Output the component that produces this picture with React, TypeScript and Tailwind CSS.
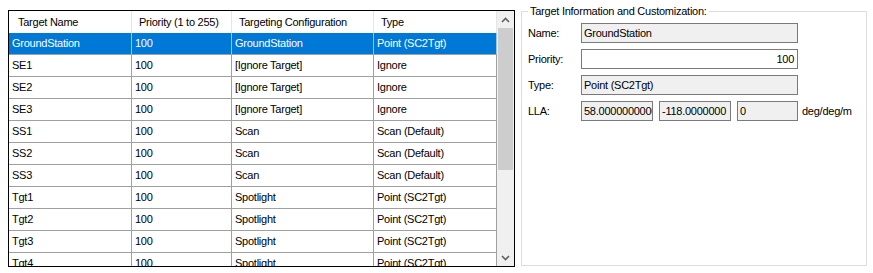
import React from 'react';

const columns = [
  { title: 'Target Name', w: 'w-[123px]', hpad: 'pl-[9px]' },
  { title: 'Priority (1 to 255)', w: 'w-[100px]', hpad: 'pl-[7px]' },
  { title: 'Targeting Configuration', w: 'w-[142px]', hpad: 'pl-[7px]' },
  { title: 'Type', w: 'w-[123px]', hpad: 'pl-[7px]' },
];

const rows = [
  ['GroundStation', '100', 'GroundStation', 'Point (SC2Tgt)'],
  ['SE1', '100', '[Ignore Target]', 'Ignore'],
  ['SE2', '100', '[Ignore Target]', 'Ignore'],
  ['SE3', '100', '[Ignore Target]', 'Ignore'],
  ['SS1', '100', 'Scan', 'Scan (Default)'],
  ['SS2', '100', 'Scan', 'Scan (Default)'],
  ['SS3', '100', 'Scan', 'Scan (Default)'],
  ['Tgt1', '100', 'Spotlight', 'Point (SC2Tgt)'],
  ['Tgt2', '100', 'Spotlight', 'Point (SC2Tgt)'],
  ['Tgt3', '100', 'Spotlight', 'Point (SC2Tgt)'],
  ['Tgt4', '100', 'Spotlight', 'Point (SC2Tgt)'],
];

const Chevron = ({ down }: { down?: boolean }) => (
  <svg width="9" height="6" viewBox="0 0 9 6" className={down ? 'rotate-180' : ''}>
    <path d="M1 5 L4.5 1.5 L8 5" fill="none" stroke="#606060" strokeWidth="1.6" />
  </svg>
);

const Box = ({ value, w, readOnly = true, right }: { value: string; w: string; readOnly?: boolean; right?: boolean }) => (
  <div
    className={`${w} h-[20px] border border-[#7a7a7a] flex items-center overflow-hidden whitespace-nowrap ${readOnly ? 'bg-[#f0f0f0]' : 'bg-white'} ${right ? 'justify-end pr-[3px]' : 'pl-[2px]'}`}
  >
    {value}
  </div>
);

export default function App() {
  return (
    <div className="w-[873px] h-[273px] bg-white flex items-start pl-[8px] pt-[10px] text-[11px] tracking-[-0.25px] text-black font-['Liberation_Sans',Arial,sans-serif] overflow-hidden">
      {/* grid */}
      <div className="w-[507px] h-[257px] border border-black flex overflow-hidden shrink-0">
        <div className="w-[488px] flex flex-col overflow-hidden">
          <div className="flex h-[22px] shrink-0 bg-white">
            {columns.map((c, i) => (
              <div key={i} className={`${c.w} ${c.hpad} h-full border-r border-[#e5e5e5] flex items-center shrink-0 whitespace-nowrap`}>
                {c.title}
              </div>
            ))}
          </div>
          {rows.map((r, ri) => {
            const sel = ri === 0;
            return (
              <div key={ri} className={`flex h-[22px] shrink-0 border-b border-[#a0a0a0] ${sel ? 'bg-[#0078d7] text-white' : 'bg-white'}`}>
                {r.map((cell, ci) => (
                  <div key={ci} className={`${columns[ci].w} h-full border-r ${sel ? 'border-[#9cc3e8]' : 'border-[#a0a0a0]'} flex items-center pl-[3px] shrink-0 whitespace-nowrap overflow-hidden`}>
                    {cell}
                  </div>
                ))}
              </div>
            );
          })}
        </div>
        {/* scrollbar */}
        <div className="w-[17px] h-full bg-[#f0f0f0] flex flex-col">
          <div className="h-[17px] flex items-center justify-center shrink-0">
            <Chevron />
          </div>
          <div className="flex-1 flex flex-col">
            <div className="h-[142px] mx-px bg-[#cdcdcd]" />
          </div>
          <div className="h-[17px] flex items-center justify-center shrink-0">
            <Chevron down />
          </div>
        </div>
      </div>

      {/* details group */}
      <fieldset className="ml-[6px] mt-[-5px] w-[346px] h-[261px] border border-[#dcdcdc] px-[6px] pt-0 pb-0 shrink-0">
        <legend className="px-[2px] leading-[12px]">Target Information and Customization:</legend>
        <div className="flex flex-col gap-[6px] mt-[6px]">
          <div className="flex items-center">
            <div className="w-[53px]">Name:</div>
            <Box value="GroundStation" w="w-[217px]" />
          </div>
          <div className="flex items-center">
            <div className="w-[53px]">Priority:</div>
            <Box value="100" w="w-[217px]" readOnly={false} right />
          </div>
          <div className="flex items-center">
            <div className="w-[53px]">Type:</div>
            <Box value="Point (SC2Tgt)" w="w-[217px]" />
          </div>
          <div className="flex items-center">
            <div className="w-[53px]">LLA:</div>
            <div className="flex items-center gap-[6px]">
              <Box value="58.000000000000" w="w-[72px]" />
              <Box value="-118.0000000" w="w-[72px]" />
              <Box value="0" w="w-[61px]" />
            </div>
            <div className="ml-[4px]">deg/deg/m</div>
          </div>
        </div>
      </fieldset>
    </div>
  );
}
